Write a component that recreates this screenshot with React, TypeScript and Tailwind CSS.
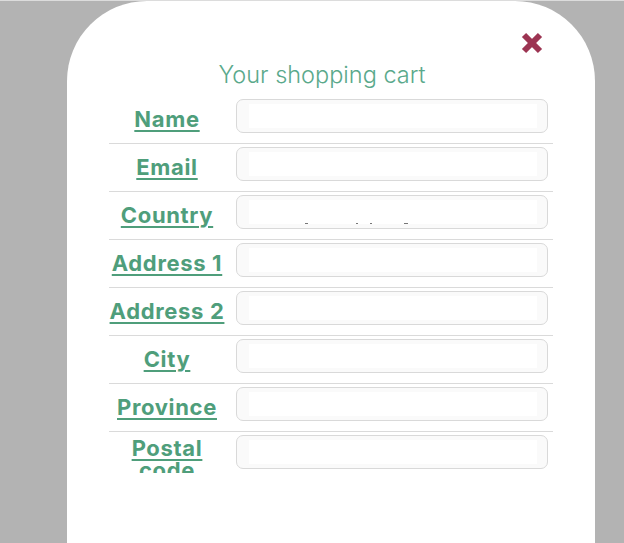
import React from "react";

const fields = ["Name", "Email", "Country", "Address 1", "Address 2", "City", "Province", "Postal code"];

const font = { fontFamily: "Inter, 'Noto Sans', sans-serif" };

function Row({ label, last, idx }: { label: string; last: boolean; idx: number }) {
  const twoLines = last;
  return (
    <div className={`flex h-[48px] ${last ? "" : "border-b border-[#dadada]"}`}>
      <div
        className={`w-[116px] h-[41px] overflow-hidden flex justify-center items-start ${
          twoLines ? "pt-[5px]" : "pt-[12px]"
        }`}
      >
        <a
          href="#"
          className="text-center text-[22px] leading-[22px] tracking-[0.03em] font-bold text-[#4f9e7b] underline decoration-2 underline-offset-[3px]"
          style={font}
        >
          {label}
        </a>
      </div>
      <div className="ml-[11px] mt-[3px] w-[312px] h-[34px] rounded-[7px] border border-[#d9d9d9] bg-[#fafafa] pt-[4px] pb-[4px] pl-[12px] pr-[10px]">
        <div className="h-full bg-white flex items-end">
          {idx === 2 && (
            <div className="flex items-end h-[1px] w-full">
              <div className="ml-[56px] w-[3px] h-[1px] bg-[#777]" />
              <div className="ml-[48px] w-[2px] h-[1px] bg-[#777]" />
              <div className="ml-[12px] w-[2px] h-[1px] bg-[#777]" />
              <div className="ml-[32px] w-[4px] h-[1px] bg-[#777]" />
            </div>
          )}
        </div>
      </div>
    </div>
  );
}

export default function App() {
  return (
    <div className="w-[624px] h-[543px] bg-[#b3b3b3] border-t border-[#dcdcdc] overflow-hidden">
      <div className="relative ml-[67px] w-[528px] h-[600px] bg-white rounded-t-[80px]">
        <button className="absolute left-[453px] top-[30px] w-[24px] h-[24px]">
          <svg width="24" height="24" viewBox="0 0 24 24">
            <line x1="4" y1="4" x2="20" y2="20" stroke="#9c3452" strokeWidth="6" />
            <line x1="20" y1="4" x2="4" y2="20" stroke="#9c3452" strokeWidth="6" />
          </svg>
        </button>
        <div className="pt-[59px] pl-[42px]">
          <h2
            className="w-[426px] text-center text-[23.5px] leading-[30px] font-light text-[#5aa98b]"
            style={font}
          >
            Your shopping cart
          </h2>
          <div className="w-[444px] mt-[6px]">
            {fields.map((f, i) => (
              <Row key={f} label={f} idx={i} last={i === fields.length - 1} />
            ))}
          </div>
        </div>
      </div>
    </div>
  );
}
